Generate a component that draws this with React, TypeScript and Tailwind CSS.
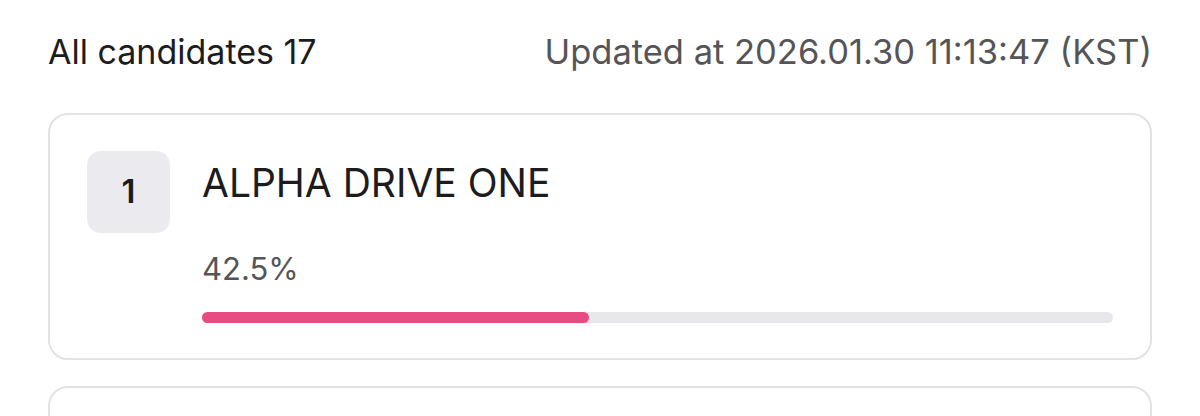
import React from 'react';

const candidates = [
  { rank: 1, name: 'ALPHA DRIVE ONE', percent: 42.5 },
  { rank: 2, name: '', percent: 0 },
];

function CandidateCard({ rank, name, percent }: { rank: number; name: string; percent: number }) {
  return (
    <div className="flex gap-8 rounded-[20px] border-2 border-[#e2e2e5] bg-white px-[37px] pt-[36px] pb-[35px]">
      <div className="flex h-[82px] w-[83px] shrink-0 items-center justify-center rounded-[14px] bg-[#ebebef] text-[33px] font-semibold text-[#1c1c1e]">
        {rank}
      </div>
      <div className="flex flex-1 flex-col">
        <h3 className="mt-[8px] text-[39px] leading-[47px] text-[#1c1c1e]">{name}</h3>
        <span className="mt-[44px] text-[31px] leading-[38px] text-[#555558]">{percent}%</span>
        <div className="mt-[24px] h-[11px] w-full rounded-full bg-[#e8e8ec]">
          <div className="h-full rounded-full bg-[#e84b82]" style={{ width: `${percent}%` }} />
        </div>
      </div>
    </div>
  );
}

export default function App() {
  return (
    <div className="min-h-screen bg-white px-12 pt-[30px] font-['Inter',sans-serif]">
      <div className="flex items-center justify-between">
        <h2 className="text-[34px] leading-[44px] text-[#1c1c1e]">All candidates 17</h2>
        <span className="text-[34.5px] leading-[44px] text-[#555558]">
          Updated at 2026.01.30 11:13:47 (KST)
        </span>
      </div>
      <div className="mt-[39px] flex flex-col gap-[26px]">
        {candidates.map((c) => (
          <CandidateCard key={c.rank} {...c} />
        ))}
      </div>
    </div>
  );
}
